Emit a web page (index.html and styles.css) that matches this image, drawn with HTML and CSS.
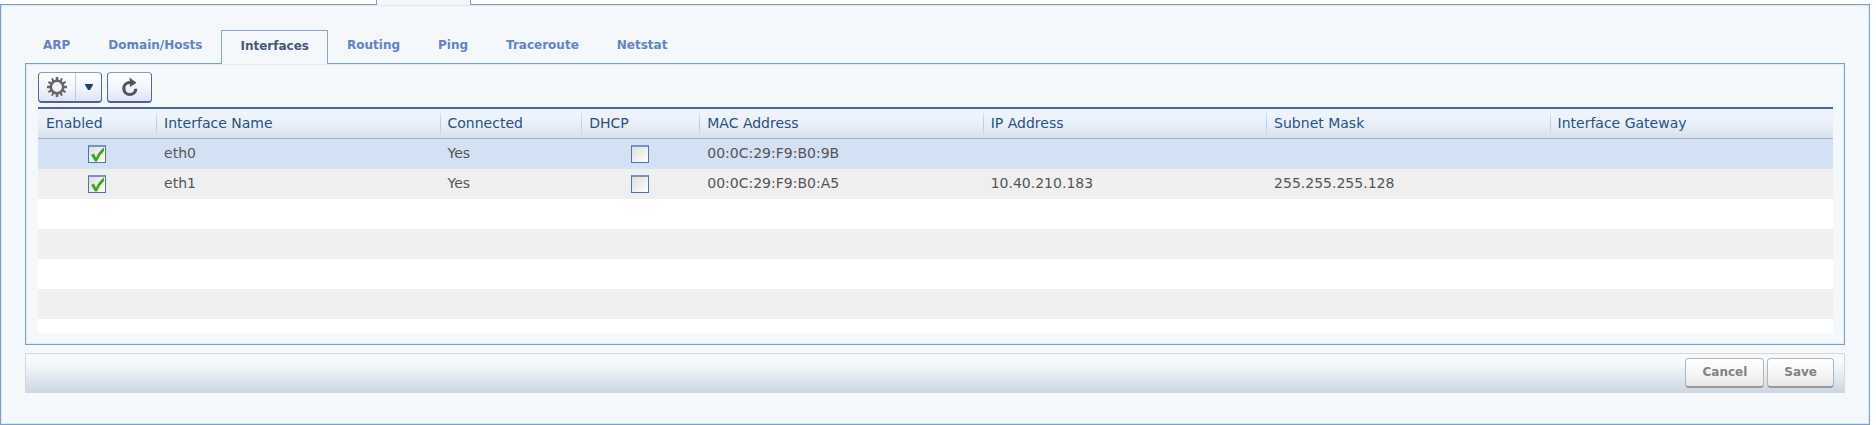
FILE: index.html
```
<!DOCTYPE html>
<html lang="en">
<head>
 <meta charset="UTF-8">
 <meta name="viewport" content="width=device-width, initial-scale=1.0">
 <title>Interfaces</title>
 <link rel="stylesheet" href="styles.css">
</head>
<body>
 <div class="top-strip"><div class="top-tab"></div></div>
 <main class="page-panel">
  <nav class="tabs">
   <a href="#arp">ARP</a>
   <a href="#domain">Domain/Hosts</a>
   <a href="#interfaces" class="active" aria-current="page">Interfaces</a>
   <a href="#routing">Routing</a>
   <a href="#ping">Ping</a>
   <a href="#traceroute">Traceroute</a>
   <a href="#netstat">Netstat</a>
  </nav>
  <section class="content">
   <div class="toolbar">
    <div class="split-button">
     <button type="button" class="gear-button" aria-label="Actions">
      <svg width="20" height="20" viewBox="0 0 20 20">
       <circle cx="10" cy="10" r="6.2" fill="none" stroke="#666" stroke-width="2.6"/>
       <g stroke="#666" stroke-width="2.6">
        <path d="M10 0v4M10 16v4M0 10h4M16 10h4"/>
        <path d="M5 1.4l1.6 3.3M15 1.4l-1.6 3.3M5 18.6l1.6-3.3M15 18.6l-1.6-3.3M1.4 5l3.3 1.6M18.6 5l-3.3 1.6M1.4 15l3.3-1.6M18.6 15l-3.3-1.6" stroke-width="2"/>
       </g>
      </svg>
     </button>
     <button type="button" class="arrow-button" aria-label="Open actions menu">
      <svg width="8" height="6" viewBox="0 0 8 6"><path d="M0 0h8v1L5 6H3L0 1z" fill="#23476b"/></svg>
     </button>
    </div>
    <button type="button" class="refresh-button" aria-label="Refresh">
     <svg width="18" height="20" viewBox="0 0 18 20">
      <path d="M9.5 5.5H8.3a6 6 0 1 0 6.5 6.2" fill="none" stroke="#555" stroke-width="3.2"/>
      <path d="M8.5 0.5l7 5.2-6.5 4.3z" fill="#555"/>
     </svg>
    </button>
   </div>
   <div class="grid">
    <table>
     <colgroup>
      <col class="col-small"><col><col class="col-medium"><col class="col-small"><col><col><col><col>
     </colgroup>
     <thead>
      <tr>
       <th>Enabled</th>
       <th>Interface Name</th>
       <th>Connected</th>
       <th>DHCP</th>
       <th>MAC Address</th>
       <th>IP Address</th>
       <th>Subnet Mask</th>
       <th>Interface Gateway</th>
      </tr>
     </thead>
     <tbody>
      <tr class="selected">
       <td class="check"><input type="checkbox" aria-label="eth0 enabled" checked></td>
       <td>eth0</td>
       <td>Yes</td>
       <td class="check"><input type="checkbox" aria-label="eth0 DHCP"></td>
       <td>00:0C:29:F9:B0:9B</td>
       <td></td>
       <td></td>
       <td></td>
      </tr>
      <tr>
       <td class="check"><input type="checkbox" aria-label="eth1 enabled" checked></td>
       <td>eth1</td>
       <td>Yes</td>
       <td class="check"><input type="checkbox" aria-label="eth1 DHCP"></td>
       <td>00:0C:29:F9:B0:A5</td>
       <td>10.40.210.183</td>
       <td>255.255.255.128</td>
       <td></td>
      </tr>
     </tbody>
    </table>
    <div class="empty-rows"></div>
   </div>
  </section>
  <footer class="actions">
   <button type="button">Cancel</button>
   <button type="button">Save</button>
  </footer>
 </main>
</body>
</html>
```
FILE: styles.css
```
* {
 box-sizing: border-box;
}

body {
 display: flex;
 flex-direction: column;
 min-height: 100vh;
 margin: 0;
 padding-right: 6px;
 background-color: #fff;
 font-family: Verdana, "DejaVu Sans", sans-serif;
 font-size: 14px;
 color: #555;
}

.top-strip {
 display: flex;
 height: 4px;
 padding-left: 376px;
}

/* covers the top border of the panel */
.top-tab {
 width: 95px;
 height: 5px;
 border: solid #7c9dc9;
 border-width: 0 1px;
 background-color: #f4f8fa;
 z-index: 1;
}

.page-panel {
 display: flex;
 flex-direction: column;
 flex: 1;
 padding: 25px 24px 31px;
 border: 1px solid #7c9fcb;
 box-shadow: inset 0 0 0 1px #dce7f0;
 background-color: #f4f8fa;
}

.tabs {
 display: flex;
 align-items: stretch;
 height: 34px;
 margin-bottom: -1px;
}

.tabs a {
 padding: 0 18px;
 border: 1px solid transparent;
 border-bottom: none;
 font-size: 12px;
 font-weight: bold;
 line-height: 29px;
 color: #6681cc;
 text-decoration: none;
}

.tabs a:first-child {
 padding-left: 17px;
}

.tabs a.active {
 border-color: #87a6cb;
 background-color: #f4f8fa;
 line-height: 31px;
 color: #485780;
 z-index: 1;
}

.content {
 display: flex;
 flex-direction: column;
 flex: 1;
 padding: 8px 11px 11px 12px;
 border: 1px solid #7c9fcb;
 box-shadow: inset 0 0 0 1px #e3ecf3;
}

.toolbar {
 display: flex;
 gap: 5px;
 margin-bottom: 4px;
}

button {
 display: flex;
 justify-content: center;
 align-items: center;
 padding: 0;
 font-family: inherit;
 cursor: pointer;
}

.split-button,
.refresh-button {
 display: flex;
 height: 31px;
 border: 1px solid #4c69a8;
 border-top-color: #7f9fce;
 border-bottom: 2px solid #4a619f;
 border-radius: 4px;
 background: linear-gradient(#fff, #f4f5fc 50%, #dfe3f5);
}

.split-button {
 width: 64px;
}

.split-button button {
 border: none;
 background: none;
}

.gear-button {
 width: 36px;
}

.split-button .arrow-button {
 flex: 1;
 border-left: 1px solid #b4cdf3;
}

.refresh-button {
 width: 45px;
}

.grid {
 display: flex;
 flex-direction: column;
 flex: 1;
}

table {
 width: 100%;
 border-collapse: separate;
 border-spacing: 0;
 table-layout: fixed;
}

.col-small {
 width: 6.58%;
}

.col-medium {
 width: 7.89%;
}

th,
td {
 height: 30px;
 padding: 0 0 2px 8px;
 text-align: left;
 white-space: nowrap;
}

th {
 height: 32px;
 border-top: 2px solid #4665a0;
 border-bottom: 1px solid #a2b5c9;
 background: linear-gradient(#f0f5fc, #eaf0f9 50%, #d7e2ee);
 font-weight: normal;
 color: #285084;
}

/* column separators fade out at both ends */
th + th {
 background:
  linear-gradient(rgba(176, 203, 228, 0), #b0cbe4 50%, rgba(176, 203, 228, 0)) left / 1px 100% no-repeat,
  linear-gradient(#f0f5fc, #eaf0f9 50%, #d7e2ee);
}

td {
 background-color: #efefef;
}

.selected td {
 background-color: #d4e0f3;
}

td.check {
 padding: 0;
 text-align: center;
}

input[type="checkbox"] {
 display: block;
 width: 18px;
 height: 18px;
 margin: 0 auto;
 appearance: none;
 border: 1px solid #4b74a9;
 border-top: 2px solid #7695c0;
 background: linear-gradient(135deg, #deded9, #fff) no-repeat;
}

input[type="checkbox"]:checked {
 background: url("data:image/svg+xml,%3Csvg xmlns='http://www.w3.org/2000/svg' viewBox='0 0 16 15'%3E%3Cpath d='M2 8L5 6.5L7 10.5Q10 4 15 0.5V4Q10.5 8 8 14.5H6Z' fill='%233aab1c'/%3E%3C/svg%3E") center / 100% 100% no-repeat, linear-gradient(135deg, #deded9, #fff) no-repeat;
}

.empty-rows {
 flex: 1;
 background: repeating-linear-gradient(#fff 0 30px, #efefef 30px 60px);
}

.actions {
 display: flex;
 justify-content: flex-end;
 align-items: center;
 gap: 3px;
 height: 40px;
 margin-top: 8px;
 padding-right: 10px;
 border: 1px solid #d5d9dd;
 background: linear-gradient(#f5f9fb 25%, #ccd7e5);
}

.actions button {
 height: 30px;
 padding: 0 16px 1px;
 border: 1px solid #b5b5b5;
 border-bottom: 2px solid #999;
 border-radius: 4px;
 background: linear-gradient(#fff, #f6f6f6 50%, #e8e8e8);
 font-size: 12px;
 font-weight: bold;
 color: #828282;
}
```
